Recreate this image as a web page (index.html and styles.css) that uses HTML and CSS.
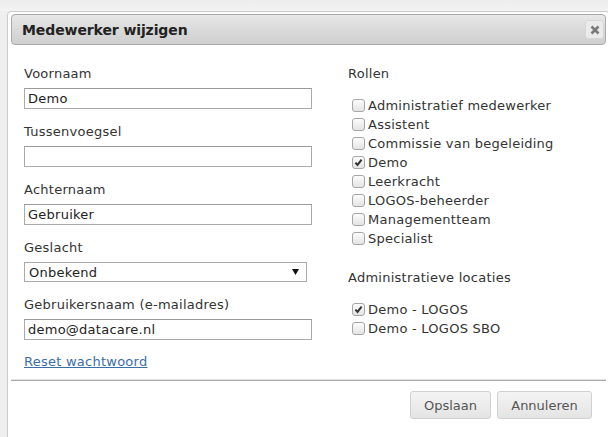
FILE: index.html
```html
<!DOCTYPE html>
<html lang="nl">
<head>
<meta charset="utf-8">
<title>Medewerker wijzigen</title>
<link rel="stylesheet" href="styles.css">
</head>
<body>
<div class="page">
  <div class="dialog">
    <div class="titlebar">
      <span class="title">Medewerker wijzigen</span>
      <button class="close" type="button" aria-label="Sluiten">
        <svg width="10" height="10" viewBox="0 0 10 10"><path d="M1.5 1.5 L8.5 8.5 M8.5 1.5 L1.5 8.5" stroke="#7a7a7a" stroke-width="2.6" stroke-linecap="butt"/></svg>
      </button>
    </div>
    <div class="content">
      <div class="col-left">
        <div class="field">
          <label class="lbl">Voornaam</label>
          <input class="txt" type="text" value="Demo">
        </div>
        <div class="field">
          <label class="lbl">Tussenvoegsel</label>
          <input class="txt" type="text" value="">
        </div>
        <div class="field">
          <label class="lbl">Achternaam</label>
          <input class="txt" type="text" value="Gebruiker">
        </div>
        <div class="field">
          <label class="lbl">Geslacht</label>
          <div class="select">
            <span>Onbekend</span>
            <svg class="arrow" width="7" height="6" viewBox="0 0 7 6"><path d="M0 0 H7 L3.5 6 Z" fill="#111"/></svg>
          </div>
        </div>
        <div class="field last">
          <label class="lbl">Gebruikersnaam (e-mailadres)</label>
          <input class="txt" type="text" value="demo@datacare.nl">
        </div>
        <a class="reset" href="#">Reset wachtwoord</a>
      </div>
      <div class="col-right">
        <div class="lbl">Rollen</div>
        <ul class="checks">
          <li><span class="cb"></span>Administratief medewerker</li>
          <li><span class="cb"></span>Assistent</li>
          <li><span class="cb"></span>Commissie van begeleiding</li>
          <li><span class="cb on"><svg width="11" height="11" viewBox="0 0 11 11"><path d="M2.4 5.6 L4.5 7.9 L8.6 2.6" fill="none" stroke="#333" stroke-width="2"/></svg></span>Demo</li>
          <li><span class="cb"></span>Leerkracht</li>
          <li><span class="cb"></span>LOGOS-beheerder</li>
          <li><span class="cb"></span>Managementteam</li>
          <li><span class="cb"></span>Specialist</li>
        </ul>
        <div class="lbl section">Administratieve locaties</div>
        <ul class="checks">
          <li><span class="cb on"><svg width="11" height="11" viewBox="0 0 11 11"><path d="M2.4 5.6 L4.5 7.9 L8.6 2.6" fill="none" stroke="#333" stroke-width="2"/></svg></span>Demo - LOGOS</li>
          <li><span class="cb"></span>Demo - LOGOS SBO</li>
        </ul>
      </div>
    </div>
    <div class="buttonpane">
      <button class="btn btn-save" type="button">Opslaan</button>
      <button class="btn btn-cancel" type="button">Annuleren</button>
    </div>
  </div>
</div>
</body>
</html>
```
FILE: styles.css
```css
html, body {
  margin: 0;
  padding: 0;
  height: 100%;
  overflow: hidden;
}

body {
  background: linear-gradient(to bottom, #ececec 0, #f3f3f3 11px, #efefef 11px);
  font-family: "DejaVu Sans", Verdana, sans-serif;
  font-size: 13px;
  letter-spacing: 0.25px;
  color: #333;
}

.page {
  padding: 11px 0 0 7px;
  height: 100%;
  box-sizing: border-box;
}

.dialog {
  width: 603px;
  height: 440px;
  box-sizing: border-box;
  background: #fff;
  border: 1px solid #c9c9c9;
  border-radius: 4px;
  padding: 2px 3px;
}

.titlebar {
  height: 31px;
  box-sizing: border-box;
  border: 1px solid #aaa;
  border-radius: 4px;
  background: linear-gradient(to bottom, #e8e8e8 0%, #dadada 50%, #cfcfcf 100%);
  display: flex;
  align-items: center;
  justify-content: space-between;
  padding: 0 1px 0 10px;
}

.title {
  font-weight: bold;
  font-size: 14px;
  color: #222;
  letter-spacing: -0.1px;
}

.close {
  width: 19px;
  height: 19px;
  padding: 0;
  border: 1px solid #d6d6d6;
  border-radius: 3px;
  background: #ebebeb;
  display: flex;
  align-items: center;
  justify-content: center;
}

.content {
  display: grid;
  grid-template-columns: 288px 1fr;
  column-gap: 36px;
  padding: 21px 0 0 13px;
  height: 335px;
  box-sizing: border-box;
}

.field {
  display: flex;
  flex-direction: column;
  margin-bottom: 15px;
}

.field.last {
  margin-bottom: 14px;
}

.lbl {
  display: block;
  line-height: 16px;
  color: #333;
  margin-bottom: 6px;
}

.txt {
  height: 21px;
  box-sizing: border-box;
  width: 288px;
  margin: 0;
  border: 1px solid #aaa;
  border-top-color: #9a9a9a;
  padding: 0 3px;
  font-family: "DejaVu Sans", Verdana, sans-serif;
  font-size: 13px;
  letter-spacing: 0.25px;
  color: #222;
  background: #fff;
}

.select {
  height: 20px;
  width: 283px;
  box-sizing: border-box;
  border: 1px solid #aaa;
  display: flex;
  align-items: center;
  justify-content: space-between;
  padding: 0 7px 0 4px;
  color: #222;
}

.reset {
  color: #3a6ea5;
  text-decoration: underline;
  line-height: 16px;
  display: inline-block;
}

.col-right .lbl {
  margin-bottom: 7px;
}

.checks {
  list-style: none;
  margin: 14px 0 0;
  padding: 0 0 0 4px;
}

.checks li {
  display: flex;
  align-items: center;
  height: 19px;
  color: #333;
}

.cb {
  width: 13px;
  height: 13px;
  box-sizing: border-box;
  border: 1px solid #a6a6a6;
  border-radius: 3px;
  background: linear-gradient(to bottom, #fcfcfc, #e4e4e4);
  margin-right: 3px;
  display: flex;
  align-items: center;
  justify-content: center;
  flex: none;
}

.cb svg {
  display: block;
}

.col-right .section {
  margin-top: 22px;
  margin-bottom: 14px;
}

.buttonpane {
  border-top: 1px solid #aaa;
  box-shadow: 0 -1px 0 #e2e2e2;
  padding: 10px 14px 0 0;
  display: flex;
  justify-content: flex-end;
  gap: 6px;
}

.btn {
  height: 28px;
  padding: 0;
  border: 1px solid #d0d0d0;
  border-radius: 3px;
  background: linear-gradient(to bottom, #f4f4f4, #e4e4e4);
  font-family: "DejaVu Sans", Verdana, sans-serif;
  font-size: 13px;
  color: #555;
}

.btn-save {
  width: 81px;
}

.btn-cancel {
  width: 95px;
}
```
